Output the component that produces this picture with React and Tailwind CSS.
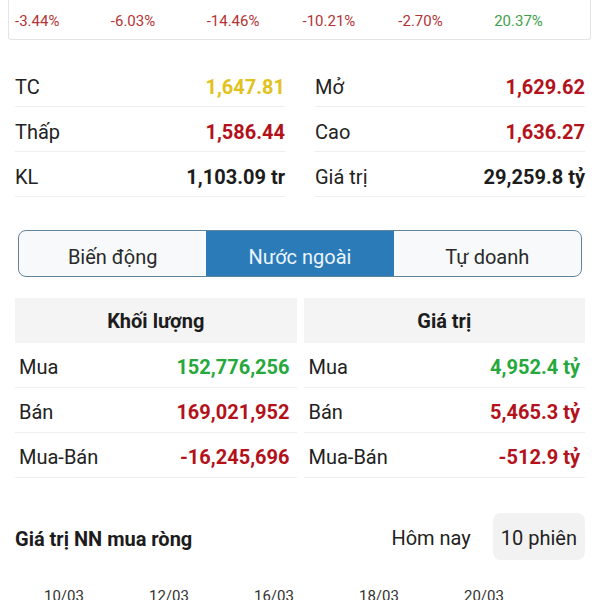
import React from "react";

const pcts = [
  { v: "-3.44%", up: false },
  { v: "-6.03%", up: false },
  { v: "-14.46%", up: false },
  { v: "-10.21%", up: false },
  { v: "-2.70%", up: false },
  { v: "20.37%", up: true },
];

const stats = [
  [
    { label: "TC", value: "1,647.81", color: "text-[#e2c21c]" },
    { label: "Mở", value: "1,629.62", color: "text-[#b3121b]" },
  ],
  [
    { label: "Thấp", value: "1,586.44", color: "text-[#b3121b]" },
    { label: "Cao", value: "1,636.27", color: "text-[#b3121b]" },
  ],
  [
    { label: "KL", value: "1,103.09 tr", color: "text-[#1c1c1c]" },
    { label: "Giá trị", value: "29,259.8 tỷ", color: "text-[#1c1c1c]" },
  ],
];

const volume = [
  { label: "Mua", value: "152,776,256", color: "text-[#26a83c]" },
  { label: "Bán", value: "169,021,952", color: "text-[#b3121b]" },
  { label: "Mua-Bán", value: "-16,245,696", color: "text-[#b3121b]" },
];

const value = [
  { label: "Mua", value: "4,952.4 tỷ", color: "text-[#26a83c]" },
  { label: "Bán", value: "5,465.3 tỷ", color: "text-[#b3121b]" },
  { label: "Mua-Bán", value: "-512.9 tỷ", color: "text-[#b3121b]" },
];

const dates = ["10/03", "12/03", "16/03", "18/03", "20/03"];

function StatCell({ item }) {
  return (
    <div className="flex h-[45px] items-center justify-between border-b border-[#eeeeee] pt-[5px]">
      <span className="text-[#222]">{item.label}</span>
      <span className={`font-bold ${item.color}`}>{item.value}</span>
    </div>
  );
}

function FlowColumn({ title, rows, pl, pr }) {
  return (
    <div className="flex flex-col">
      <div className="flex h-[45px] items-center justify-center bg-[#f4f4f4] pt-[1px] font-bold text-[#1c1c1c]">
        {title}
      </div>
      {rows.map((r) => (
        <div
          key={r.label}
          className={`flex h-[45px] items-center justify-between border-b border-[#eeeeee] pt-[4px] ${pl} ${pr}`}
        >
          <span className="text-[#222]">{r.label}</span>
          <span className={`font-bold ${r.color}`}>{r.value}</span>
        </div>
      ))}
    </div>
  );
}

export default function App() {
  return (
    <div
      className="h-[600px] w-[600px] overflow-hidden bg-white text-[20px]"
      style={{ fontFamily: "Roboto, 'Noto Sans', sans-serif" }}
    >
      {/* change strip */}
      <div className="mx-[8px] mr-[9px] grid h-[40px] grid-cols-6 rounded-b-[3px] border border-t-0 border-[#e4e4e4] pl-[6px] pt-[12px] text-[15px] leading-[18px]">
        {pcts.map((p) => (
          <span key={p.v} className={p.up ? "text-[#3d9f48]" : "text-[#b23434]"}>
            {p.v}
          </span>
        ))}
      </div>

      {/* summary */}
      <div className="mt-[22px] grid grid-cols-2 gap-x-[30px] px-[15px]">
        {stats.map((row) =>
          row.map((item) => <StatCell key={item.label} item={item} />)
        )}
      </div>

      {/* tabs */}
      <div className="mx-[18px] mt-[33px] grid h-[47px] grid-cols-3 overflow-hidden rounded-[8px] border-[1.5px] border-[#5f849c] bg-[#f7f9fb] text-[#2a2a2a]">
        <div className="flex items-center justify-center pt-[6px]">Biến động</div>
        <div className="flex items-center justify-center bg-[#2b7bb9] pt-[6px] text-[#eaf5fc]">
          Nước ngoài
        </div>
        <div className="flex items-center justify-center pt-[6px]">Tự doanh</div>
      </div>

      {/* foreign flows */}
      <div className="mt-[21px] grid grid-cols-2 gap-x-[7px] pl-[15px] pr-[15px]">
        <FlowColumn title="Khối lượng" rows={volume} pl="pl-[4px]" pr="pr-[7px]" />
        <FlowColumn title="Giá trị" rows={value} pl="pl-[5px]" pr="pr-[5px]" />
      </div>

      {/* net buy */}
      <div className="mt-[35px] flex h-[47px] items-center pl-[15px] pr-[15px]">
        <span className="pt-[4px] font-bold text-[#1c1c1c]">Giá trị NN mua ròng</span>
        <span className="ml-auto mr-[22px] pt-[2px] text-[#222]">Hôm nay</span>
        <span className="flex h-[47px] items-center rounded-[8px] bg-[#f2f2f2] px-[8px] pt-[2px] text-[#222]">
          10 phiên
        </span>
      </div>

      <div className="mt-[27px] flex pl-[44px] text-[15px] leading-[18px] text-[#333]">
        {dates.map((d) => (
          <span key={d} className="w-[105px]">
            {d}
          </span>
        ))}
      </div>
    </div>
  );
}
